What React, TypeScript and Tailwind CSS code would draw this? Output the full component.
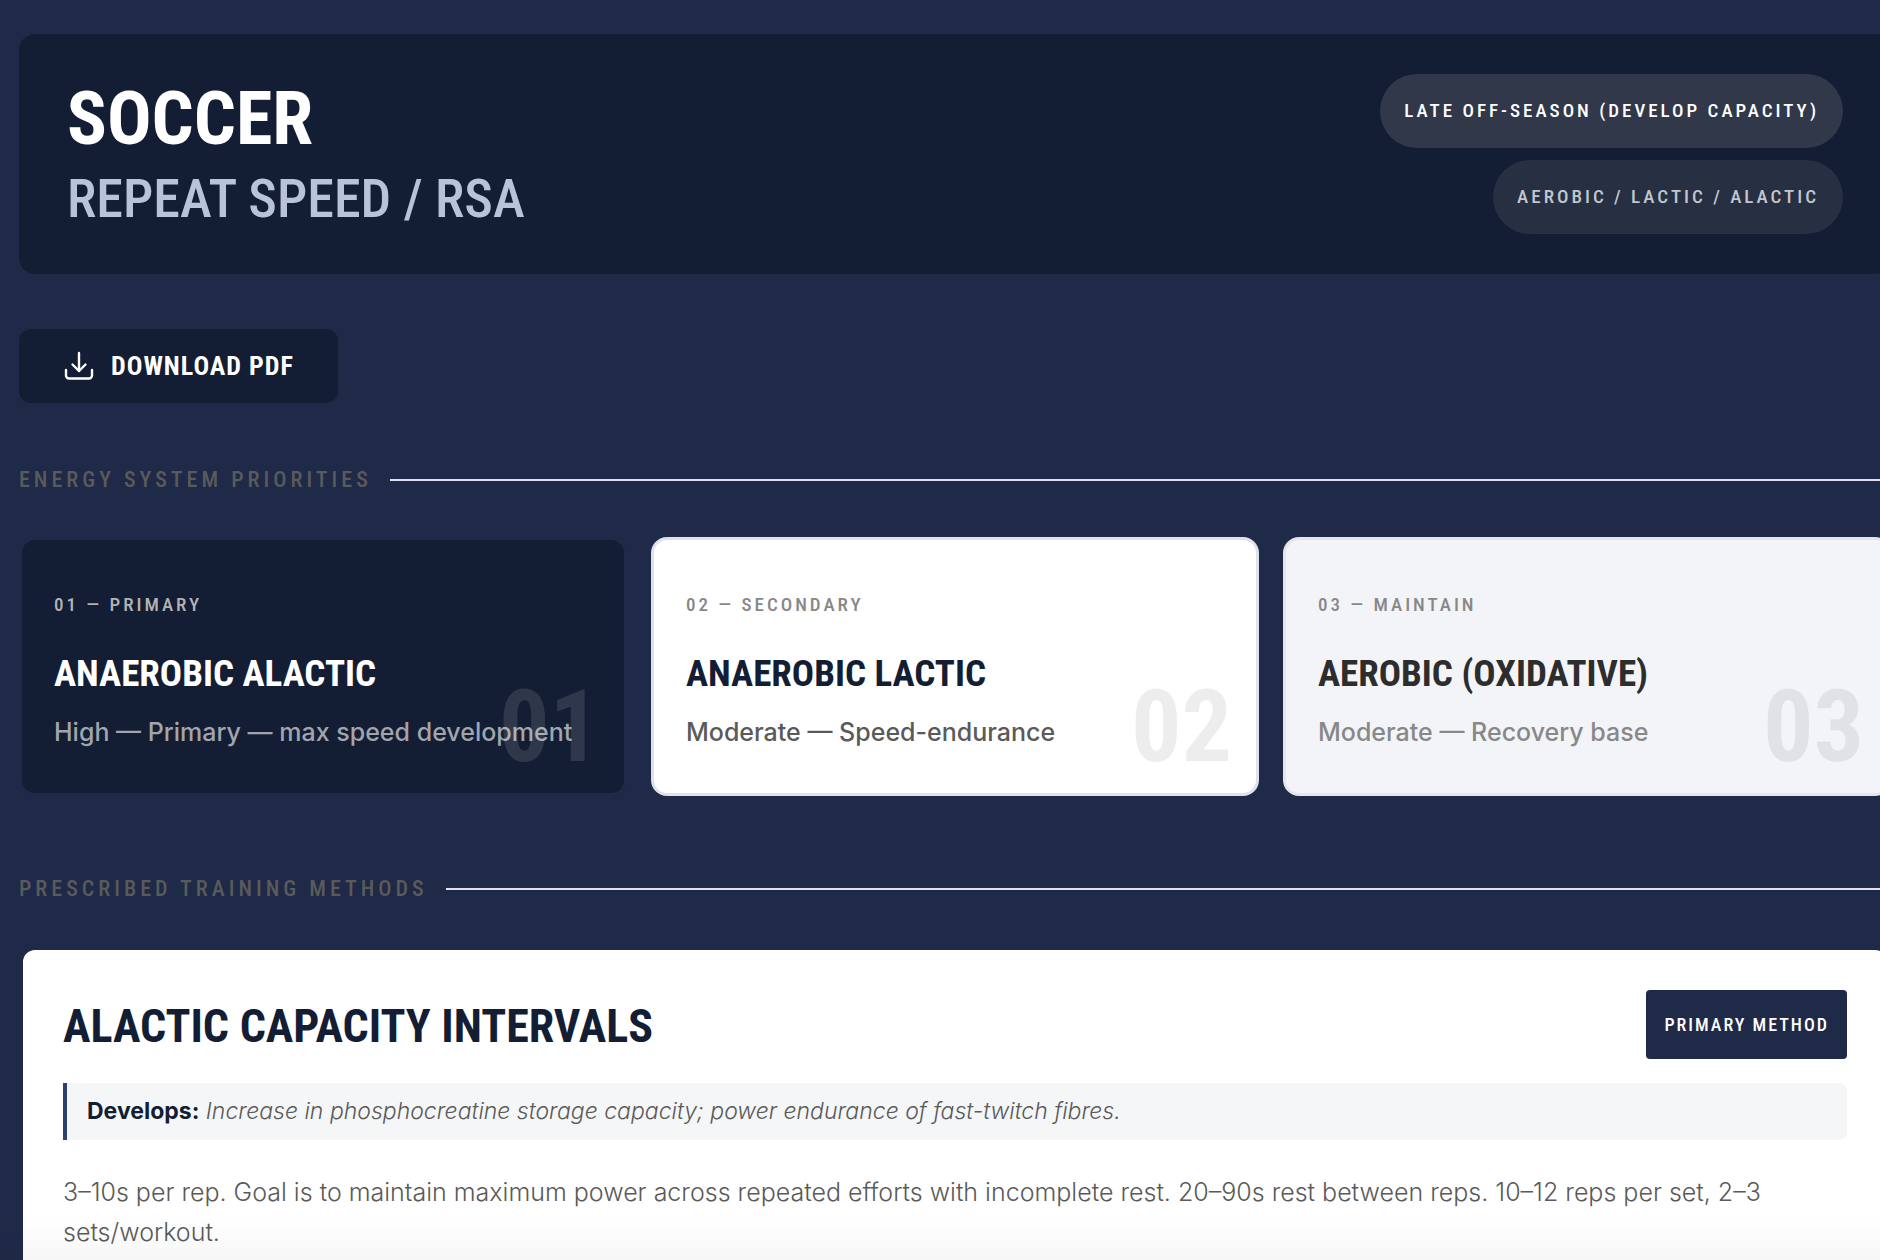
import clsx from "clsx";

const condensed = "font-['Roboto_Condensed','Liberation_Sans_Narrow',sans-serif]";

const priorities = [
  {
    num: "01",
    level: "Primary",
    title: "Anaerobic Alactic",
    desc: "High — Primary — max speed development",
    card: "bg-[#131d33] border-[#1f2a48]",
    labelColor: "text-[#b3b3b3]",
    titleColor: "text-white",
    descColor: "text-[#a0a5ae]",
    numColor: "text-white/12",
  },
  {
    num: "02",
    level: "Secondary",
    title: "Anaerobic Lactic",
    desc: "Moderate — Speed-endurance",
    card: "bg-white border-[#dde2ec]",
    labelColor: "text-[#888888]",
    titleColor: "text-[#131d33]",
    descColor: "text-[#5a5a5a]",
    numColor: "text-black/7",
  },
  {
    num: "03",
    level: "Maintain",
    title: "Aerobic (Oxidative)",
    desc: "Moderate — Recovery base",
    card: "bg-[#f3f4f8] border-[#e4e6ef]",
    labelColor: "text-[#888888]",
    titleColor: "text-[#2d2d2d]",
    descColor: "text-[#888888]",
    numColor: "text-black/7",
  },
];

function DownloadIcon() {
  return (
    <svg
      width="32"
      height="32"
      viewBox="0 0 32 32"
      fill="none"
      stroke="currentColor"
      strokeWidth="2.4"
      strokeLinecap="round"
      strokeLinejoin="round"
      aria-hidden="true"
    >
      <path d="M16 3v18" />
      <path d="M9.5 14.5 16 21l6.5-6.5" />
      <path d="M3 20v5.5a3 3 0 0 0 3 3h20a3 3 0 0 0 3-3V20" />
    </svg>
  );
}

function SectionHeading({ children }: { children: string }) {
  return (
    <div className="flex items-center gap-[18px]">
      <h2 className={clsx(condensed, "text-[22px] leading-[34px] font-medium tracking-[4px] uppercase text-[#5a5a5a]")}>
        {children}
      </h2>
      <div className="h-[2px] flex-1 bg-[#dde2ee]" />
    </div>
  );
}

export default function App() {
  return (
    <div className="relative h-screen overflow-hidden bg-[#1f2a48] pt-[34px] pl-[19px] font-['Inter',sans-serif]">
      {/* sheet runs slightly past the right edge of the window */}
      <main className="-mr-[11px]">
        <header className="flex items-center justify-between rounded-2xl bg-[#131d33] px-12 py-10">
          <div className={clsx(condensed, "uppercase")}>
            <h1 className="text-[74px] leading-[90px] font-bold text-white">Soccer</h1>
            <p className="text-[54px] leading-[70px] font-medium text-[#b8c2d8]">Repeat Speed / RSA</p>
          </div>
          <div
            className={clsx(
              condensed,
              "flex flex-col items-end gap-3 text-[19px] leading-[34px] font-medium tracking-[3px] uppercase"
            )}
          >
            <span className="rounded-[37px] bg-[#30384a] px-6 py-5 text-white">Late Off-Season (Develop Capacity)</span>
            <span className="rounded-[37px] bg-[#272f43] px-6 py-5 text-[#c3c6cc]">Aerobic / Lactic / Alactic</span>
          </div>
        </header>

        <button
          type="button"
          className={clsx(
            condensed,
            "mt-[55px] flex h-[74px] items-center gap-4 rounded-xl bg-[#131d33] px-11 text-[26px] font-bold tracking-[1px] uppercase text-white"
          )}
        >
          <DownloadIcon />
          Download PDF
        </button>

        <section className="mt-[60px]">
          <SectionHeading>Energy System Priorities</SectionHeading>
          <div className="mt-10 grid grid-cols-3 gap-6">
            {priorities.map((p) => (
              <article key={p.num} className={clsx("relative rounded-2xl border-3 px-8 pt-12 pb-[43px]", p.card)}>
                <p
                  className={clsx(
                    condensed,
                    "text-[19px] leading-[34px] font-medium tracking-[3px] uppercase",
                    p.labelColor
                  )}
                >
                  {p.num} — {p.level}
                </p>
                <h3 className={clsx(condensed, "mt-[26px] text-[37px] leading-[52px] font-bold uppercase", p.titleColor)}>
                  {p.title}
                </h3>
                <p className={clsx("mt-[14px] text-[25px] leading-[36px] font-medium", p.descColor)}>{p.desc}</p>
                <span
                  className={clsx(
                    condensed,
                    "absolute right-6 bottom-4 text-[100px] leading-[100px] font-bold",
                    p.numColor
                  )}
                >
                  {p.num}
                </span>
              </article>
            ))}
          </div>
        </section>

        <section className="mt-[76px]">
          <SectionHeading>Prescribed Training Methods</SectionHeading>
          <article className="mt-10 rounded-2xl border-4 border-[#1f2a48] bg-white p-10">
            <div className="flex items-center justify-between">
              <h3 className={clsx(condensed, "pt-1 text-[46px] leading-[65px] font-bold uppercase text-[#131d33]")}>
                Alactic Capacity Intervals
              </h3>
              <span
                className={clsx(
                  condensed,
                  "rounded bg-[#1f2a48] px-[18px] text-[18px] leading-[69px] font-medium tracking-[2px] uppercase text-white"
                )}
              >
                Primary Method
              </span>
            </div>
            <p className="mt-6 rounded-r-lg border-l-4 border-[#2f4070] bg-[#f5f6f8] py-[10px] pl-5 text-[23px] leading-[37px] font-light italic text-[#5a5a5a]">
              <strong className="font-bold not-italic text-[#131d33]">Develops:</strong> Increase in phosphocreatine
              storage capacity; power endurance of fast-twitch fibres.
            </p>
            <p className="mt-8 text-[25px] leading-[40px] font-light text-[#5a5a5a]">
              3–10s per rep. Goal is to maintain maximum power across repeated efforts with incomplete rest. 20–90s rest
              between reps. 10–12 reps per set, 2–3 sets/workout.
            </p>
          </article>
        </section>
      </main>
      <div className="pointer-events-none absolute inset-x-0 bottom-0 h-12 bg-linear-to-b from-transparent to-black/3" />
    </div>
  );
}
